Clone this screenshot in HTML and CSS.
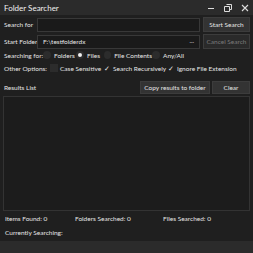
FILE: index.html
```html
<!DOCTYPE html>
<html lang="en">
<head>
    <meta charset="UTF-8">
    <title>Folder Searcher</title>
    <link rel="stylesheet" href="styles.css">
</head>
<body>
    <div class="window">
        <div class="titlebar">
            <span class="title">Folder Searcher</span>
            <div class="controls">
                <span class="ctl">
                    <svg width="8" height="8" viewBox="0 0 8 8"><path d="M1 4.5h6" stroke="#ddd" stroke-width="1"/></svg>
                </span>
                <span class="ctl">
                    <svg width="8" height="8" viewBox="0 0 8 8"><path d="M2.5 0.5h5v5h-1.5M0.5 2.5h5v5h-5z" fill="none" stroke="#ddd" stroke-width="1"/></svg>
                </span>
                <span class="ctl">
                    <svg width="8" height="8" viewBox="0 0 8 8"><path d="M1 1l6 6M7 1l-6 6" stroke="#ddd" stroke-width="1.1"/></svg>
                </span>
            </div>
        </div>

        <div class="row">
            <span class="label">Search for</span>
            <div class="field"></div>
            <button class="btn">Start Search</button>
        </div>
        <div class="row">
            <span class="label">Start Folder</span>
            <div class="field">F:\testfolderdx<span class="browse">...</span></div>
            <button class="btn disabled">Cancel Search</button>
        </div>

        <div class="opts">
            <span class="optlabel">Searching for:</span>
            <span class="item w33"><span class="radio"></span>Folders</span>
            <span class="item w28"><span class="radio on"></span>Files</span>
            <span class="item w48"><span class="radio"></span>File Contents</span>
            <span class="item"><span class="radio"></span>Any/All</span>
        </div>
        <div class="opts">
            <span class="optlabel wide">Other Options:</span>
            <span class="item w53"><span class="check"></span>Case Sensitive</span>
            <span class="item w64"><span class="check on">&#10003;</span>Search Recursively</span>
            <span class="item"><span class="check on">&#10003;</span>Ignore File Extension</span>
        </div>

        <div class="results-head">
            <span class="results-title">Results List</span>
            <button class="btn copy">Copy results to folder</button>
            <button class="btn clear">Clear</button>
        </div>
        <div class="results"></div>

        <div class="stats">
            <span class="stat">Items Found: 0</span>
            <span class="stat">Folders Searched: 0</span>
            <span class="stat">Files Searched: 0</span>
        </div>
        <div class="current">Currently Searching:</div>
        <div class="progress"></div>
    </div>
</body>
</html>
```

FILE: styles.css
```css
body {
    margin: 0;
    padding: 0;
    background-color: #1f1f1f;
    color: #e6e6e6;
    font-family: 'Lato', 'Open Sans', sans-serif;
    font-size: 6.5px;
    white-space: nowrap;
}
.window {
    width: 253px;
    height: 253px;
    display: flex;
    flex-direction: column;
    background-color: #1f1f1f;
}
.titlebar {
    height: 15px;
    display: flex;
    align-items: center;
    justify-content: space-between;
    background-color: #2b2b2b;
    padding: 0 0 0 4px;
}
.title {
    font-size: 8px;
    color: #f0f0f0;
}
.controls {
    display: flex;
}
.ctl {
    width: 17px;
    height: 15px;
    display: flex;
    align-items: center;
    justify-content: center;
}
.row {
    display: flex;
    align-items: center;
    gap: 3px;
    padding: 2px 3px 0 4px;
    height: 15px;
}
.label {
    width: 30px;
}
.field {
    flex: 1;
    height: 14px;
    background-color: #1a1a1a;
    border: 1px solid #383838;
    box-sizing: border-box;
    display: flex;
    align-items: center;
    padding-left: 5px;
    position: relative;
}
.browse {
    position: absolute;
    right: 5px;
    top: 1px;
}
.btn {
    font-family: inherit;
    font-size: 6.5px;
    color: #e6e6e6;
    background-color: #333333;
    border: 1px solid #3c3c3c;
    height: 15px;
    width: 47px;
    padding: 0;
    white-space: nowrap;
}
.btn.disabled {
    color: #7a7a7a;
    background-color: #2a2a2a;
}
.opts {
    display: flex;
    align-items: center;
    height: 13px;
    padding: 0 4px;
}
.optlabel {
    width: 39px;
}
.optlabel.wide {
    width: 46px;
}
.item {
    display: flex;
    align-items: center;
}
.w33 { width: 33px; }
.w28 { width: 28px; }
.w48 { width: 48px; }
.w53 { width: 53px; }
.w64 { width: 64px; }
.radio {
    width: 8px;
    height: 8px;
    border-radius: 50%;
    background-color: #2c2c2c;
    margin-right: 3px;
    box-sizing: border-box;
}
.radio.on {
    background-color: #f0f0f0;
    border: 2px solid #2c2c2c;
}
.check {
    width: 8px;
    height: 8px;
    background-color: #2c2c2c;
    margin-right: 2px;
    font-size: 7px;
    line-height: 8px;
    text-align: center;
}
.check.on {
    background-color: transparent;
}
.results-head {
    display: flex;
    align-items: center;
    margin-top: 5px;
    padding: 0 3px 0 4px;
    height: 16px;
}
.results-title {
    flex: 1;
}
.btn.copy {
    width: 70px;
    height: 13px;
    margin-right: 2px;
}
.btn.clear {
    width: 38px;
    height: 13px;
}
.results {
    margin: 1px 3px 0 3px;
    height: 116px;
    border: 1px solid #333333;
    background-color: #1c1c1c;
}
.stats {
    display: flex;
    padding: 0 5px;
    height: 14px;
    align-items: center;
    margin-top: 1px;
}
.stat {
    width: 70px;
}
.stat:nth-child(2) {
    width: 88px;
}
.current {
    padding: 0 5px;
    height: 14px;
    display: flex;
    align-items: center;
}
.progress {
    margin: 2px 0 0 0;
    height: 12px;
    background-color: #2b2b2b;
}
```
